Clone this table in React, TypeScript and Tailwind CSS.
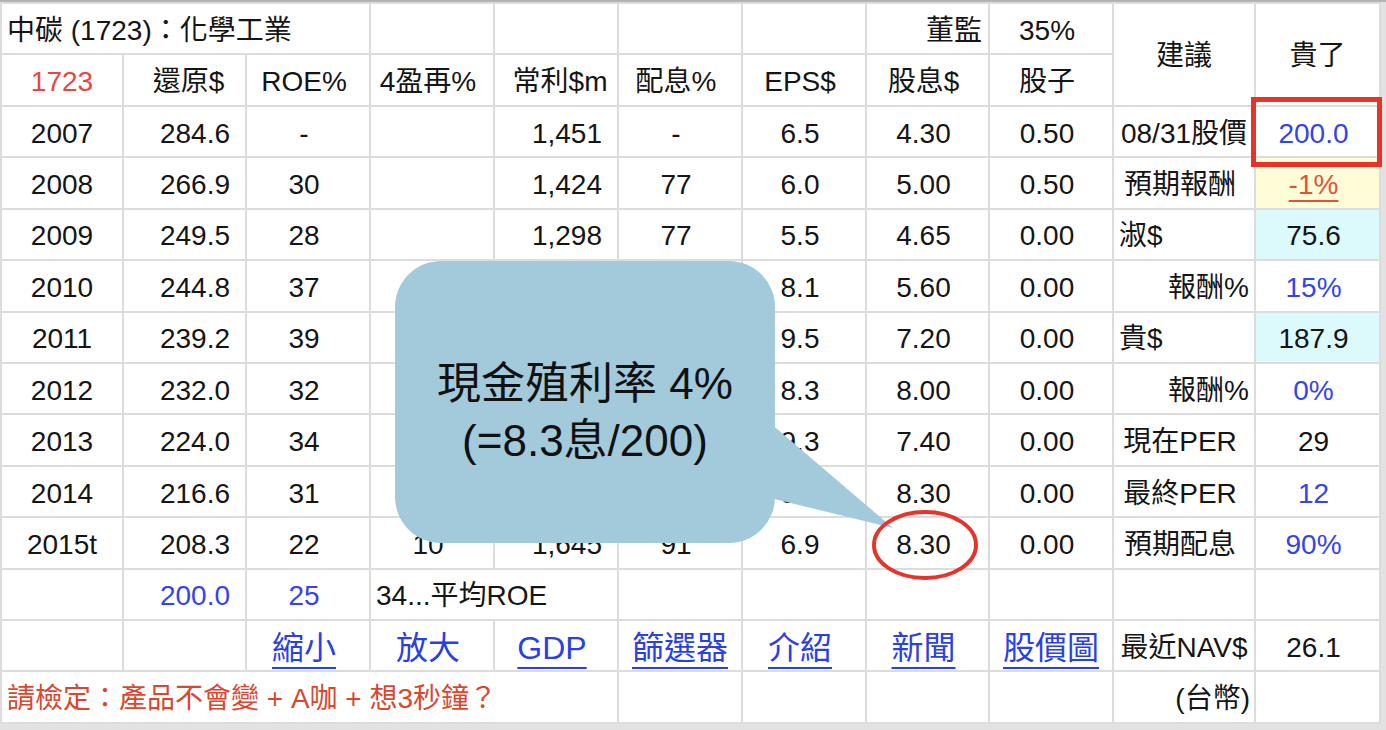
import React from "react";

type Align = "l" | "c" | "r";

interface Cell {
  text?: React.ReactNode;
  align?: Align;
  span?: number;
  rowSpan?: number;
  className?: string;
}

const BLUE = "text-[#3343ee]";
const LINK = "text-[32px] text-[#2a3fe4] underline decoration-2 underline-offset-[8px]";

const alignClass: Record<Align, string> = {
  l: "text-left pl-[5px]",
  c: "text-center pr-2",
  r: "text-right pr-[15px]",
};

const c = (text?: React.ReactNode, align: Align = "c", className = ""): Cell => ({
  text,
  align,
  className,
});

// cols 3-5 of 2010-2014 sit under the callout, so they stay blank
const years: Array<[string, string, string, string, string, string, string, string, string, Cell, Cell]> = [
  ["2007", "284.6", "-", "", "1,451", "-", "6.5", "4.30", "0.50", c("08/31股價", "c", "!pr-0"), c("200.0", "c", BLUE)],
  ["2008", "266.9", "30", "", "1,424", "77", "6.0", "5.00", "0.50", c("預期報酬"), c(<span className="text-[#e0533a] underline decoration-2 underline-offset-[6px]">-1%</span>, "c", "bg-[#fffcd8]")],
  ["2009", "249.5", "28", "", "1,298", "77", "5.5", "4.65", "0.00", c("淑$", "l"), c("75.6", "c", "bg-[#dcf9fb]")],
  ["2010", "244.8", "37", "", "", "", "8.1", "5.60", "0.00", c("報酬%", "r", "!pr-[5px]"), c("15%", "c", BLUE)],
  ["2011", "239.2", "39", "", "", "", "9.5", "7.20", "0.00", c("貴$", "l"), c("187.9", "c", "bg-[#dcf9fb]")],
  ["2012", "232.0", "32", "", "", "", "8.3", "8.00", "0.00", c("報酬%", "r", "!pr-[5px]"), c("0%", "c", BLUE)],
  ["2013", "224.0", "34", "", "", "", "9.3", "7.40", "0.00", c("現在PER"), c("29")],
  ["2014", "216.6", "31", "", "", "", "9.3", "8.30", "0.00", c("最終PER"), c("12", "c", BLUE)],
  ["2015t", "208.3", "22", "10", "1,645", "91", "6.9", "8.30", "0.00", c("預期配息"), c("90%", "c", BLUE)],
];

const colAligns: Align[] = ["c", "r", "c", "c", "r", "c", "c", "c", "c"];

function buildRows(): Cell[][] {
  const rows: Cell[][] = [];
  rows.push([
    { text: "中碳 (1723)：化學工業", align: "l", span: 3 },
    c(),
    c(),
    c(),
    c(),
    c("董監", "r", "!pr-[6px]"),
    c("35%"),
    { text: "建議", align: "c", rowSpan: 2, className: "!pr-0" },
    { text: "貴了", align: "c", rowSpan: 2, className: "!pr-0" },
  ]);
  rows.push([
    c("1723", "c", "text-[#e8483e] !pr-0"),
    c("還原$", "c", "!pr-0 pl-2"),
    c("ROE%"),
    c("4盈再%"),
    c("常利$m", "c", "!pr-0 pl-2"),
    c("配息%"),
    c("EPS$"),
    c("股息$"),
    c("股子"),
  ]);
  for (const y of years) {
    const base = y.slice(0, 9) as string[];
    const cells: Cell[] = base.map((t, i) => c(t, colAligns[i], i === 0 ? "!pr-0" : ""));
    cells.push(y[9], y[10]);
    rows.push(cells);
  }
  rows.push([
    c(),
    c("200.0", "r", BLUE),
    c("25", "c", BLUE),
    { text: "34...平均ROE", align: "l", span: 2 },
    c(),
    c(),
    c(),
    c(),
    c(),
    c(),
  ]);
  rows.push([
    c(),
    c(),
    c(<span className={LINK}>縮小</span>),
    c(<span className="text-[32px] text-[#2a3fe4]">放大</span>),
    c(<span className={LINK}>GDP</span>),
    c(<span className={LINK}>篩選器</span>, "c", "!pr-0"),
    c(<span className={LINK}>介紹</span>),
    c(<span className={LINK}>新聞</span>),
    c(<span className={LINK}>股價圖</span>, "c", "!pr-0"),
    c("最近NAV$", "c", "!pr-0"),
    c("26.1"),
  ]);
  rows.push([
    { text: "請檢定：產品不會變 + A咖 + 想3秒鐘？", align: "l", span: 5, className: "text-[#d8472e]" },
    c(),
    c(),
    c(),
    c(),
    c("(台幣)", "r", "!pr-[4px]"),
    c(),
  ]);
  return rows;
}

const widths = [122, 123, 124, 124, 124, 124, 124, 123, 124, 142, 125];

export default function App() {
  const rows = buildRows();
  return (
    <div className="relative h-[730px] w-[1386px] overflow-hidden bg-[#e2e2e2] font-['Liberation_Sans','Noto_Sans_CJK_TC',sans-serif] text-[28px] text-[#151515]">
      <div className="h-[2px] w-full bg-[#b3b3b3]" />
      <div className="w-[1381px] border-r-2 border-[#d0d0d0] bg-white">
        <table className="w-[1379px] table-fixed border-collapse">
          <colgroup>
            {widths.map((w, i) => (
              <col key={i} style={{ width: w }} />
            ))}
          </colgroup>
          <tbody>
            {rows.map((row, ri) => (
              <tr key={ri} className="h-[51.43px]">
                {row.map((cell, ci) => (
                  <td
                    key={ci}
                    colSpan={cell.span}
                    rowSpan={cell.rowSpan}
                    className={`overflow-visible whitespace-nowrap border-2 border-[#dcdcdc] p-0 pt-[4px] leading-none ${alignClass[cell.align ?? "c"]} ${cell.className ?? ""}`}
                  >
                    {cell.text}
                  </td>
                ))}
              </tr>
            ))}
          </tbody>
        </table>
      </div>

      {/* price highlight */}
      <div className="absolute left-[1251px] top-[97px] h-[70px] w-[131px] border-[5px] border-[#e8322a]" />

      {/* callout tail + circle */}
      <svg className="pointer-events-none absolute left-0 top-0" width="1386" height="730">
        <polygon points="770,423 893,528 770,498" fill="#a3cadb" />
        <ellipse cx="925" cy="545" rx="51" ry="33" fill="none" stroke="#e3352b" strokeWidth="4" />
      </svg>

      {/* callout */}
      <div className="absolute left-[395px] top-[261px] flex h-[282px] w-[380px] flex-col items-center justify-center rounded-[46px] bg-[#a3cadb] pt-[20px] text-[44px] leading-[57px] text-[#111]">
        <span>現金殖利率 4%</span>
        <span>(=8.3息/200)</span>
      </div>
    </div>
  );
}
